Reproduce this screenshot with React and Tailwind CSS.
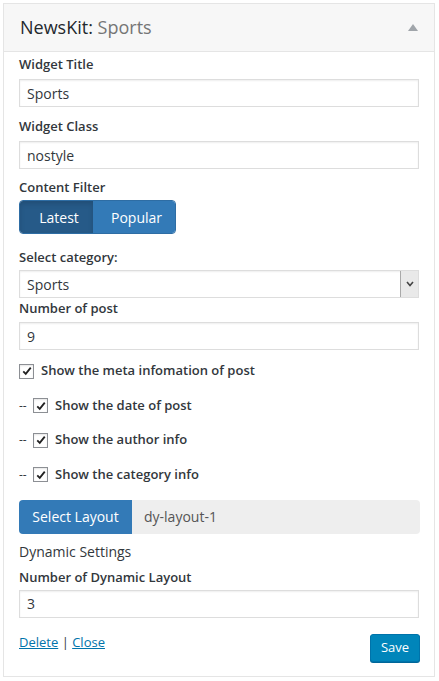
import React from "react";

const font = { fontFamily: '"Open Sans", "Noto Sans", sans-serif' };

function Label({ children, className = "" }) {
  return (
    <div className={`text-[13px] leading-[20px] font-semibold text-[#32373c] ${className}`}>
      {children}
    </div>
  );
}

function TextInput({ value, className = "" }) {
  return (
    <div
      className={`h-[28px] w-[400px] border border-[#dddddd] bg-white px-[7px] flex items-center text-[14px] text-[#32373c] shadow-[inset_0_1px_2px_rgba(0,0,0,0.07)] ${className}`}
    >
      {value}
    </div>
  );
}

function Check({ label, dash }) {
  return (
    <div className="flex items-center h-[20px] text-[13px] font-semibold text-[#32373c]">
      {dash && <span className="w-[14px] text-[#32373c] font-normal text-[12px]">--</span>}
      <span className="w-[15px] h-[15px] border border-[#8c8f94] bg-white flex items-center justify-center mr-[7px] shadow-[inset_0_1px_2px_rgba(0,0,0,0.1)]">
        <svg width="10" height="10" viewBox="0 0 12 12">
          <path d="M1.5 6.5 L4.5 9.5 L10.5 2" fill="none" stroke="#222" strokeWidth="2.2" />
        </svg>
      </span>
      {label}
    </div>
  );
}

export default function App() {
  return (
    <div className="w-[439px] h-[681px] bg-white pt-[3px] pl-[3px]" style={font}>
      <div className="w-[432px] h-[674px] border border-[#e5e5e5] bg-white flex flex-col">
        {/* header */}
        <div className="h-[48px] bg-[#f7f7f7] border-b border-[#e5e5e5] flex items-center justify-between pl-[16px] pr-[16px]">
          <div className="text-[18px] text-[#23282d]">
            NewsKit: <span className="text-[#757575]">Sports</span>
          </div>
          <svg width="10" height="7" viewBox="0 0 10 7">
            <path d="M0 7 L5 0 L10 7 Z" fill="#a0a5aa" />
          </svg>
        </div>

        <div className="pl-[15px] pt-[2px] flex flex-col">
          <Label>Widget Title</Label>
          <TextInput value="Sports" className="mt-[5px]" />

          <Label className="mt-[9px]">Widget Class</Label>
          <TextInput value="nostyle" className="mt-[5px]" />

          <Label className="mt-[8px]">Content Filter</Label>
          <div className="mt-[3px] flex h-[34px] w-[157px] rounded-[4px] overflow-hidden border border-[#2e6da4] text-[14px] text-white">
            <div className="w-[73px] bg-[#265a88] flex items-center justify-center pl-[5px] shadow-[inset_0_3px_5px_rgba(0,0,0,0.125)]">
              Latest
            </div>
            <div className="flex-1 bg-[#337ab7] flex items-center justify-center pl-[5px]">Popular</div>
          </div>

          <Label className="mt-[13px]">Select category:</Label>
          <div className="mt-[3px] h-[28px] w-[400px] border border-[#dddddd] bg-white flex items-center text-[14px] text-[#32373c] shadow-[inset_0_1px_2px_rgba(0,0,0,0.07)]">
            <span className="pl-[7px] flex-1">Sports</span>
            <span className="w-[18px] h-[26px] border-l border-[#a9a9a9] bg-[#e9e9e9] flex items-center justify-center">
              <svg width="8" height="6" viewBox="0 0 8 6">
                <path d="M1 1 L4 4.5 L7 1" fill="none" stroke="#444" strokeWidth="1.6" />
              </svg>
            </span>
          </div>

          <Label>Number of post</Label>
          <TextInput value="9" className="mt-[4px]" />

          <div className="mt-[11px] flex flex-col gap-[14.5px]">
            <Check label="Show the meta infomation of post" />
            <Check dash label="Show the date of post" />
            <Check dash label="Show the author info" />
            <Check dash label="Show the category info" />
          </div>

          <div className="mt-[15px] flex h-[34px] w-[401px] rounded-[4px] overflow-hidden text-[14px]">
            <div className="w-[113px] bg-[#337ab7] text-white flex items-center justify-center">
              Select Layout
            </div>
            <div className="flex-1 bg-[#eeeeee] text-[#555555] flex items-center pl-[12px]">dy-layout-1</div>
          </div>

          <div className="mt-[8px] text-[14px] leading-[20px] text-[#32373c]">Dynamic Settings</div>

          <Label className="mt-[5px]">Number of Dynamic Layout</Label>
          <TextInput value="3" className="mt-[3px]" />

          <div className="mt-[14px] flex justify-between w-[401px]">
            <div className="text-[13px] leading-[20px] text-[#32373c]">
              <a className="text-[#0073aa] underline">Delete</a> | <a className="text-[#0073aa] underline">Close</a>
            </div>
            <button className="mt-[2px] h-[28px] w-[50px] rounded-[3px] bg-[#0085ba] border border-[#0073aa] text-white text-[13px] shadow-[0_1px_0_#006799]">
              Save
            </button>
          </div>
        </div>
      </div>
    </div>
  );
}
